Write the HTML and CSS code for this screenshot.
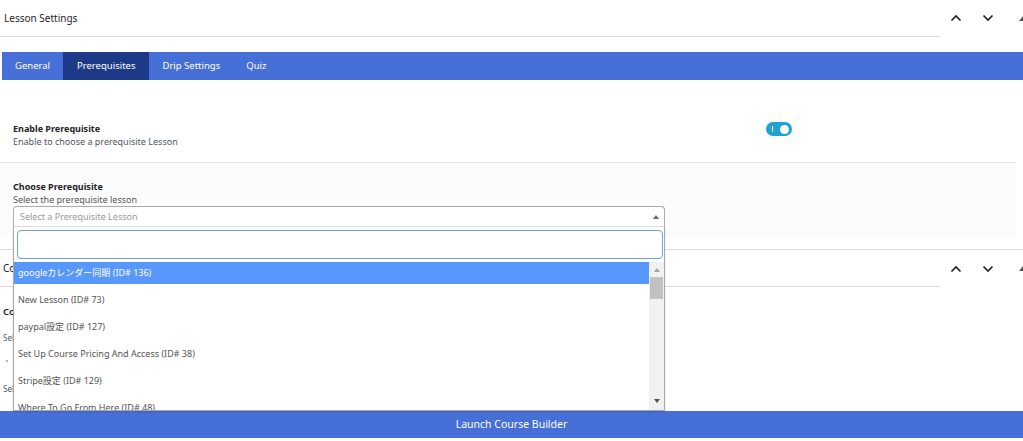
FILE: index.html
```html
<!DOCTYPE html>
<html lang="ja">
<head>
    <meta charset="UTF-8">
    <meta name="viewport" content="width=device-width, initial-scale=1.0">
    <title>Lesson Settings</title>
    <link rel="stylesheet" href="styles.css">
</head>
<body>

<div class="postbox">
    <div class="postbox-header">
        <h2 class="hndle">Lesson Settings</h2>
        <div class="handle-actions">
            <button class="handle-btn"><svg width="12" height="8" viewBox="0 0 12 8"><polyline points="1.5,6.5 6,2 10.5,6.5" /></svg></button>
            <button class="handle-btn"><svg width="12" height="8" viewBox="0 0 12 8"><polyline points="1.5,1.5 6,6 10.5,1.5" /></svg></button>
            <button class="handle-btn"><span class="sort-tri"></span></button>
        </div>
    </div>

    <div class="inside">
        <ul class="tabs">
            <li>General</li>
            <li class="active">Prerequisites</li>
            <li>Drip Settings</li>
            <li>Quiz</li>
        </ul>

        <div class="tab-panel">
            <div class="field-row">
                <div class="field-text">
                    <strong>Enable Prerequisite</strong>
                    <p>Enable to choose a prerequisite Lesson</p>
                </div>
                <div class="field-control">
                    <span class="toggle"><span class="toggle-mark"></span><span class="knob"></span></span>
                </div>
            </div>

            <div class="field-row field-select">
                <strong>Choose Prerequisite</strong>
                <p>Select the prerequisite lesson</p>
                <div class="select-wrap">
                    <div class="select-box">
                        <span class="placeholder">Select a Prerequisite Lesson</span>
                        <span class="select-arrow"></span>
                    </div>
                    <div class="dropdown">
                        <div class="search-area">
                            <input type="text" class="search-field">
                        </div>
                        <div class="results">
                            <ul class="options">
                                <li class="highlighted">googleカレンダー同期 (ID# 136)</li>
                                <li>New Lesson (ID# 73)</li>
                                <li>paypal設定 (ID# 127)</li>
                                <li>Set Up Course Pricing And Access (ID# 38)</li>
                                <li>Stripe設定 (ID# 129)</li>
                                <li>Where To Go From Here (ID# 48)</li>
                                <li>Welcome (ID# 12)</li>
                            </ul>
                            <div class="scrollbar">
                                <span class="sb-up"></span>
                                <span class="sb-thumb"></span>
                                <span class="sb-space"></span>
                                <span class="sb-down"></span>
                            </div>
                        </div>
                    </div>
                </div>
            </div>
        </div>
    </div>
</div>

<div class="postbox second">
    <div class="postbox-header">
        <h2 class="hndle">Course Settings</h2>
        <div class="handle-actions">
            <button class="handle-btn"><svg width="12" height="8" viewBox="0 0 12 8"><polyline points="1.5,6.5 6,2 10.5,6.5" /></svg></button>
            <button class="handle-btn"><svg width="12" height="8" viewBox="0 0 12 8"><polyline points="1.5,1.5 6,6 10.5,1.5" /></svg></button>
            <button class="handle-btn"><span class="sort-tri"></span></button>
        </div>
    </div>
    <div class="inside-plain">
        <strong class="sub-label">Course</strong>
        <p class="sub-desc">Select the course</p>
        <p class="sub-quote">'</p>
        <p class="sub-desc">Select the section</p>
    </div>
</div>

<div class="launch-bar">Launch Course Builder</div>

</body>
</html>
```

FILE: styles.css
```css
* {
    margin: 0;
    padding: 0;
    box-sizing: border-box;
}

html, body {
    width: 1023px;
    height: 441px;
    overflow: hidden;
}

body {
    background-color: #fff;
    font-family: "Noto Sans", "Noto Sans CJK JP", sans-serif;
    color: #1d2327;
}

ul {
    list-style: none;
}

.postbox-header {
    display: flex;
    height: 37px;
}

.hndle {
    flex: 0 0 940px;
    border-bottom: 1px solid #dcdcde;
    font-size: 10px;
    font-weight: 400;
    line-height: 36px;
    padding-left: 4px;
    color: #1d2327;
}

.handle-actions {
    display: flex;
    flex-shrink: 0;
}

.handle-btn {
    width: 32px;
    height: 36px;
    border: none;
    background: none;
    display: flex;
    align-items: center;
    justify-content: center;
}

.handle-btn svg polyline {
    fill: none;
    stroke: #1d2327;
    stroke-width: 1.7;
}

.sort-tri {
    width: 0;
    height: 0;
    margin-left: 6px;
    border-left: 4px solid transparent;
    border-right: 4px solid transparent;
    border-bottom: 5px solid #50575e;
}

.inside {
    padding-top: 15px;
}

.tabs {
    display: flex;
    margin-left: 2px;
    height: 28px;
    background-color: #476fd8;
}

.tabs li {
    padding: 0 13px;
    font-size: 9.5px;
    line-height: 28px;
    color: #fff;
}

.tabs li.active {
    background-color: #1d3a88;
    padding: 0 14px;
}

.tab-panel {
    width: 1016px;
}

.field-row {
    display: grid;
    grid-template-columns: 753px 1fr;
    padding: 42px 0 14px 13px;
    border-bottom: 1px solid #e2e4e7;
}

.field-row strong {
    display: block;
    font-size: 9px;
    font-weight: 700;
    line-height: 13px;
}

.field-row p {
    font-size: 9px;
    line-height: 13px;
    color: #50575e;
}

.toggle {
    display: flex;
    align-items: center;
    justify-content: space-between;
    width: 26px;
    height: 14px;
    padding: 0 3px 0 6px;
    border-radius: 7px;
    background-color: #1fa2d6;
}

.toggle-mark {
    width: 1px;
    height: 6px;
    background-color: #fff;
}

.knob {
    width: 9px;
    height: 9px;
    border-radius: 50%;
    background-color: #fff;
}

.field-select {
    display: block;
    margin-bottom: 11px;
    padding: 17px 351px 11px 13px;
    background-color: #fcfcfc;
    border-bottom: none;
}

.select-wrap {
    position: relative;
}

.select-box {
    display: flex;
    justify-content: space-between;
    align-items: center;
    height: 21px;
    padding: 0 5px 0 6px;
    border: 1px solid #aaa;
    border-bottom-color: #ddd;
    border-radius: 4px 4px 0 0;
    background-color: #fff;
}

.placeholder {
    font-size: 9px;
    color: #999;
}

.select-arrow {
    width: 0;
    height: 0;
    border-left: 3px solid transparent;
    border-right: 3px solid transparent;
    border-bottom: 4px solid #666;
}

.dropdown {
    position: absolute;
    top: 100%;
    left: 0;
    width: 100%;
    height: 184px;
    background-color: #fff;
    border: 1px solid #aaa;
    border-top: none;
    box-shadow: 0 1px 2px rgba(0, 0, 0, 0.15);
    display: flex;
    flex-direction: column;
    z-index: 10;
}

.search-area {
    padding: 3px 1px 3px 3px;
}

.search-field {
    display: block;
    width: 100%;
    height: 29px;
    border: 1px solid #6fa3c9;
    border-radius: 4px;
    outline: none;
}

.results {
    flex: 1;
    display: flex;
    overflow: hidden;
}

.options {
    flex: 1;
    overflow: hidden;
}

.options li {
    height: 22px;
    margin-bottom: 5px;
    padding-left: 4px;
    font-size: 9px;
    line-height: 22px;
    color: #555;
    white-space: nowrap;
}

.options li.highlighted {
    background-color: #5897fb;
    color: #fff;
}

.scrollbar {
    display: flex;
    flex-direction: column;
    align-items: center;
    width: 15px;
    background-color: #f1f1f1;
}

.sb-up,
.sb-down {
    width: 0;
    height: 0;
    border-left: 3.5px solid transparent;
    border-right: 3.5px solid transparent;
}

.sb-up {
    margin: 6px 0 5px;
    border-bottom: 4px solid #a3a3a3;
}

.sb-down {
    margin: 0 0 7px;
    border-top: 4px solid #505050;
}

.sb-thumb {
    width: 13px;
    height: 22px;
    background-color: #c1c1c1;
}

.sb-space {
    flex: 1;
}

.second .postbox-header {
    border-top: 1px solid #dcdcde;
    height: 38px;
}

.second .hndle {
    line-height: 37px;
    padding-left: 3px;
}

.second .handle-btn {
    height: 37px;
}

.inside-plain {
    height: 124px;
    padding: 18px 0 0 3px;
}

.sub-label {
    display: block;
    font-size: 9.5px;
    font-weight: 600;
    line-height: 14px;
}

.sub-desc {
    margin-top: 13px;
    font-size: 8px;
    line-height: 12px;
    color: #50575e;
}

.sub-quote {
    margin: 14px 0 0 3px;
    font-size: 8px;
    line-height: 12px;
}

.launch-bar {
    height: 27px;
    background-color: #476fd8;
    color: #fff;
    font-size: 10.5px;
    line-height: 27px;
    text-align: center;
}
```
